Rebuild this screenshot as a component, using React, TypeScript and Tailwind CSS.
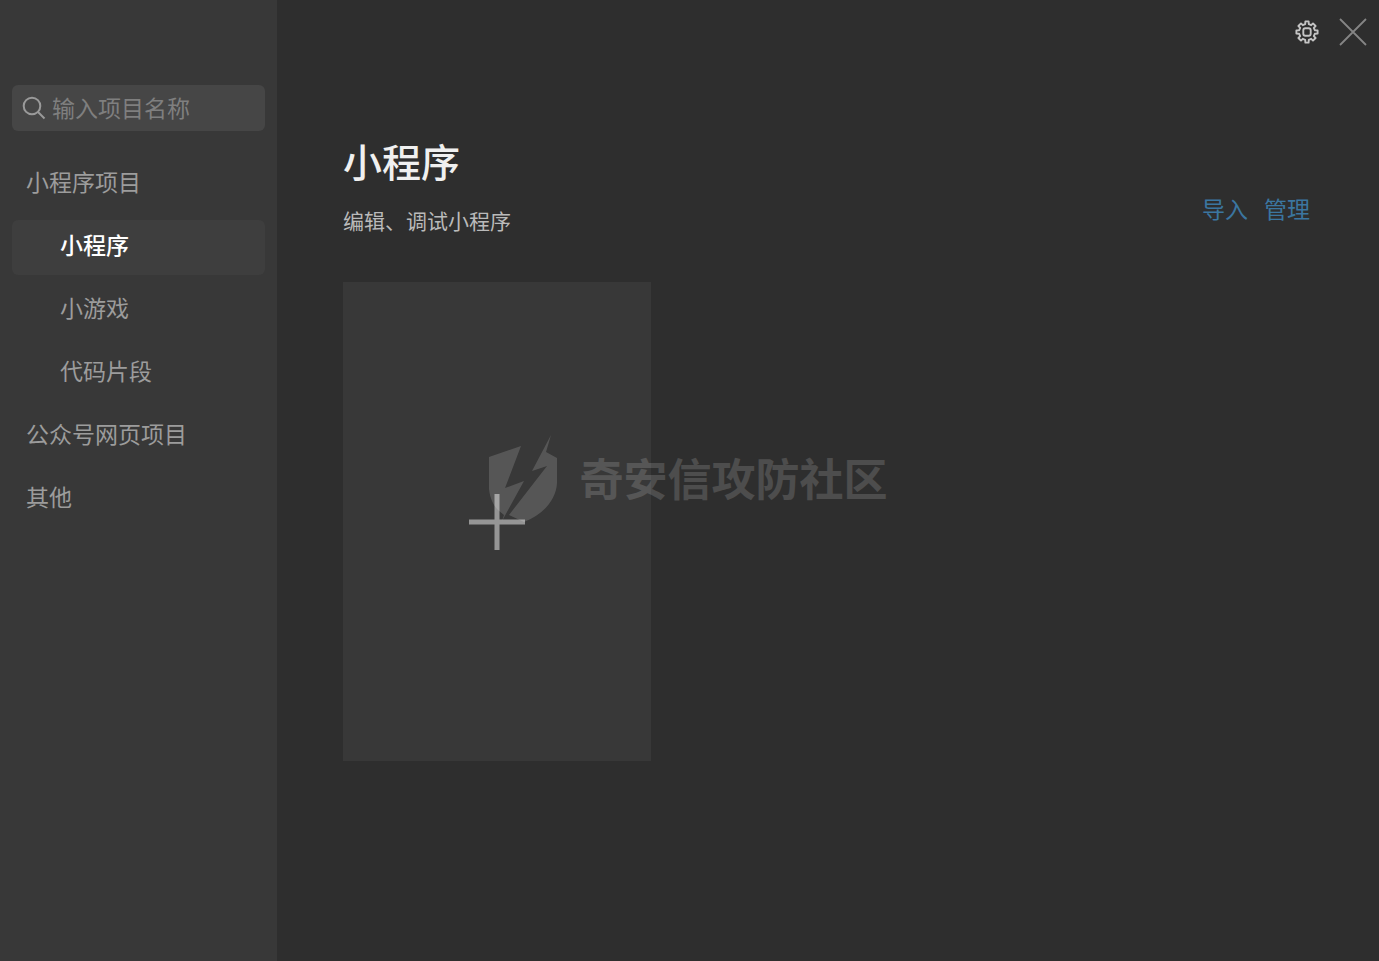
const groups = [
  {
    title: "小程序项目",
    children: ["小程序", "小游戏", "代码片段"],
  },
  { title: "公众号网页项目", children: [] },
  { title: "其他", children: [] },
];

const SearchIcon = () => (
  <svg viewBox="0 0 24 24" className="size-6 shrink-0 text-[#9a9a9a]" fill="none" stroke="currentColor" strokeWidth="2">
    <circle cx="10" cy="10" r="8.3" />
    <path d="M16 16l6.5 6.5" />
  </svg>
);

const GearIcon = () => (
  <svg viewBox="-12 -12 24 24" className="size-6" fill="none" stroke="currentColor" strokeWidth="1.9" strokeLinejoin="round">
    <path d="M-1.8-7.8L-1.6-10.6L1.6-10.6L1.8-7.8L4.2-6.8L6-8.6L8.6-6L6.8-4.2L7.8-1.8L10.6-1.6L10.6 1.6L7.8 1.8L6.8 4.2L8.6 6L6 8.6L4.2 6.8L1.8 7.8L1.6 10.6L-1.6 10.6L-1.8 7.8L-4.2 6.8L-6 8.6L-8.6 6L-6.8 4.2L-7.8 1.8L-10.6 1.6L-10.6-1.6L-7.8-1.8L-6.8-4.2L-8.6-6L-6-8.6L-4.2-6.8Z" />
    <rect x="-3.7" y="-3.7" width="7.4" height="7.4" rx="2" />
  </svg>
);

const CloseIcon = () => (
  <svg viewBox="0 0 28 28" className="size-7" fill="none" stroke="currentColor" strokeWidth="1.8">
    <path d="M1 1l26 26M27 1L1 27" />
  </svg>
);

const PlusIcon = () => (
  <svg viewBox="0 0 56 56" className="size-14" fill="none" stroke="currentColor" strokeWidth="5">
    <path d="M28 0v56M0 28h56" />
  </svg>
);

const Sidebar = () => {
  return (
    <aside className="flex w-[277px] shrink-0 flex-col gap-[26px] bg-[#383838] px-3 pt-[85px]">
      <label className="flex h-[46px] items-center gap-1.5 rounded-md bg-[#464646] px-2.5">
        <SearchIcon />
        <input
          type="text"
          aria-label="输入项目名称"
          placeholder="输入项目名称"
          className="w-full min-w-0 bg-transparent pb-0.5 text-[23px] leading-8 text-[#cccccc] outline-none placeholder:text-[#7f7f7f]"
        />
      </label>
      <nav className="flex flex-col gap-2 text-[23px] text-[#9c9c9c]">
        {groups.map((group) => (
          <div key={group.title} className="flex flex-col gap-2">
            <button className="h-[55px] px-3.5 pb-1.5 text-left">{group.title}</button>
            {group.children.map((item, i) => (
              <button
                key={item}
                className={
                  i === 0
                    ? "h-[55px] rounded-md bg-[#3e3e3e] px-12 pb-1.5 text-left font-medium text-white"
                    : "h-[55px] rounded-md px-12 pb-1.5 text-left"
                }
              >
                {item}
              </button>
            ))}
          </div>
        ))}
      </nav>
    </aside>
  );
};

const Watermark = () => {
  return (
    <div className="pointer-events-none absolute inset-0 flex items-center justify-center gap-5 pr-1 pb-1 text-white opacity-15">
      <svg viewBox="0 0 72 88" className="h-[88px] w-[72px]" fill="currentColor">
        <path d="M33 11L1 22V54C2 63 5 70 10 75L16 80L14 86L36 46L17 53Z" />
        <path d="M63 0L44 36L59 31L21 80L36 87C54 80 68 66 69 48V23L58 17Z" />
      </svg>
      <span className="pb-1 text-[44px] leading-[56px] font-bold">奇安信攻防社区</span>
    </div>
  );
};

export default function App() {
  return (
    <div
      className="relative flex min-h-screen bg-[#2e2e2e]"
      style={{ fontFamily: '"Noto Sans CJK SC", sans-serif' }}
    >
      <Sidebar />
      <main className="flex-1">
        <div className="flex h-16 items-center justify-end gap-5 pr-3">
          <button aria-label="设置" className="text-[#c4c4c4]">
            <GearIcon />
          </button>
          <button aria-label="关闭" className="text-[#858585]">
            <CloseIcon />
          </button>
        </div>
        <div className="pt-[72px] pr-[69px] pl-[66px]">
          <div className="flex items-end justify-between">
            <div>
              <h1 className="text-[39px] leading-[48px] font-medium text-[#f0f0f0]">小程序</h1>
              <p className="mt-5 text-[21px] leading-8 text-[#bababa]">编辑、调试小程序</p>
            </div>
            <div className="flex gap-4 pb-3 text-[23px] leading-8 text-[#3b76a0]">
              <a href="#import">导入</a>
              <a href="#manage">管理</a>
            </div>
          </div>
          <button
            aria-label="新建项目"
            className="mt-[46px] flex h-[479px] w-[308px] items-center justify-center bg-[#383838] text-[#959595]"
          >
            <PlusIcon />
          </button>
        </div>
      </main>
      <Watermark />
    </div>
  );
}
